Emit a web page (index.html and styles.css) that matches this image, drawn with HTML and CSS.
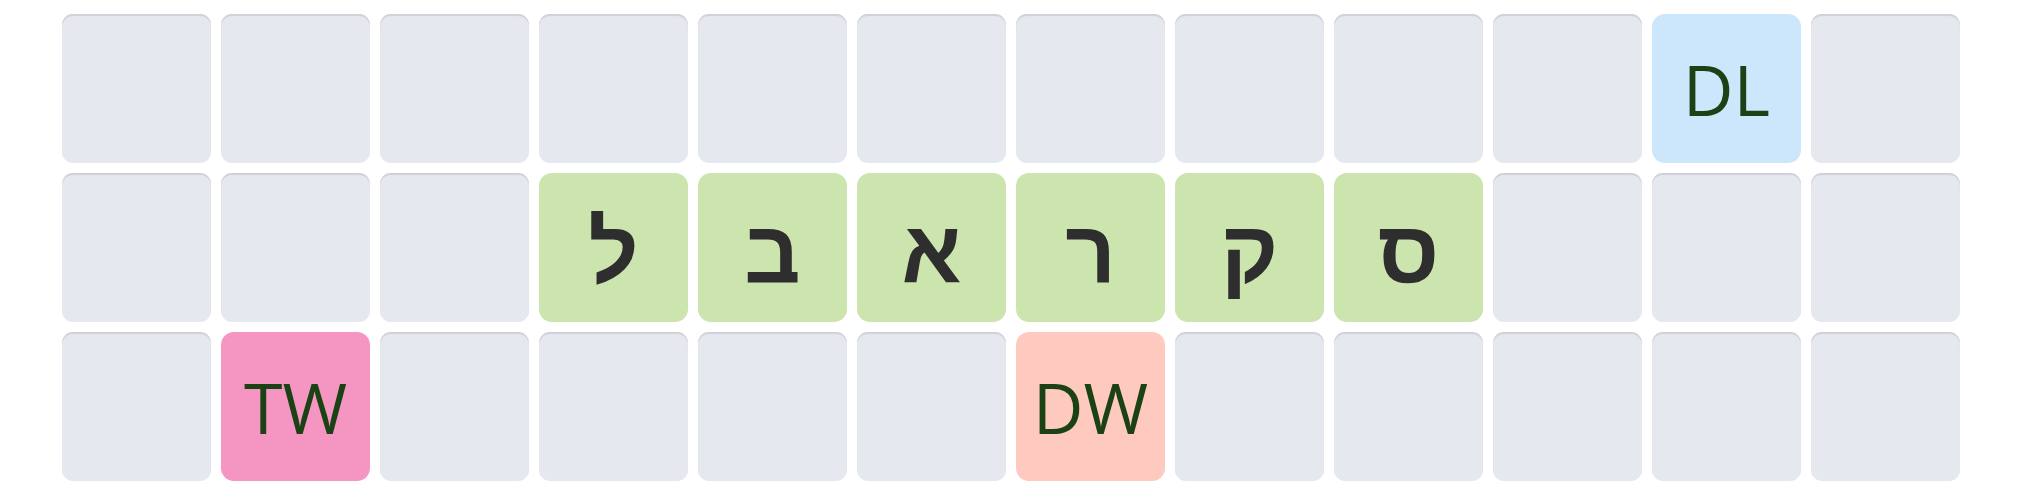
FILE: index.html
```html
<!DOCTYPE html>
<html lang="he">
<head>
<meta charset="utf-8">
<title>Board</title>
<link rel="stylesheet" href="styles.css">
</head>
<body>
<div class="board">
  <div class="cell"></div><div class="cell"></div><div class="cell"></div><div class="cell"></div>
  <div class="cell"></div><div class="cell"></div><div class="cell"></div><div class="cell"></div>
  <div class="cell"></div><div class="cell"></div>
  <div class="cell bonus dl">DL</div>
  <div class="cell"></div>

  <div class="cell"></div><div class="cell"></div><div class="cell"></div>
  <div class="cell tile">ל</div>
  <div class="cell tile">ב</div>
  <div class="cell tile">א</div>
  <div class="cell tile">ר</div>
  <div class="cell tile">ק</div>
  <div class="cell tile">ס</div>
  <div class="cell"></div><div class="cell"></div><div class="cell"></div>

  <div class="cell"></div>
  <div class="cell bonus tw">TW</div>
  <div class="cell"></div><div class="cell"></div><div class="cell"></div><div class="cell"></div>
  <div class="cell bonus dw">DW</div>
  <div class="cell"></div><div class="cell"></div><div class="cell"></div><div class="cell"></div><div class="cell"></div>
</div>
</body>
</html>
```

FILE: styles.css
```css
html, body {
  margin: 0;
  padding: 0;
  background: #ffffff;
}

body {
  width: 2020px;
  height: 500px;
  overflow: hidden;
  font-family: "Open Sans", "Noto Sans", "DejaVu Sans", sans-serif;
}

.board {
  display: grid;
  grid-template-columns: repeat(12, 149px);
  grid-template-rows: repeat(3, 149px);
  gap: 10px;
  padding: 14px 0 0 62px;
}

.cell {
  border-radius: 11px;
  background: #e6e8f0;
  box-shadow: inset 0 2px 1px #d3cfd8;
  display: flex;
  align-items: center;
  justify-content: center;
}

.bonus {
  box-shadow: none;
  border-radius: 13px;
  color: #1a4214;
  font-size: 70px;
  font-weight: 400;
}

.dl { background: #cce6fc; }
.tw { background: #f596c2; }
.dw { background: #fec9bf; }

.tile {
  box-shadow: none;
  border-radius: 13px;
  background: #cce4ae;
  color: #2e2e2e;
  font-family: "Liberation Sans", "DejaVu Sans", sans-serif;
  font-size: 88px;
  font-weight: 700;
  padding-top: 8px;
  box-sizing: border-box;
}
```
